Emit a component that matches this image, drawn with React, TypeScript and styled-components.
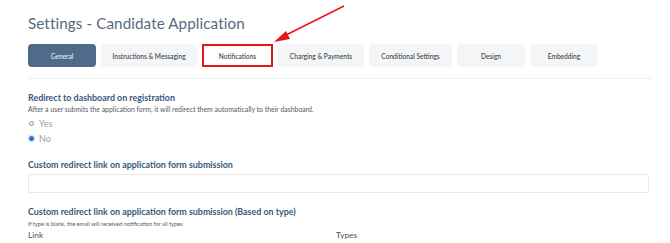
import React from 'react'
import styled, { createGlobalStyle } from 'styled-components'

// constants
const TABS = [
  { label: 'General', width: 68 },
  { label: 'Instructions & Messaging', width: 96 },
  { label: 'Notifications', width: 71, highlighted: true },
  { label: 'Charging & Payments', width: 86 },
  { label: 'Conditional Settings', width: 83 },
  { label: 'Design', width: 68 },
  { label: 'Embedding', width: 68 },
]

const GlobalStyle = createGlobalStyle`
  html, body {
    margin: 0;
    padding: 0;
    background: #ffffff;
    font-family: 'Lato', 'Noto Sans', sans-serif;
  }
`

// styled components
const Page = styled.div`
  position: relative;
  width: 670px;
  height: 243px;
  overflow: hidden;
  padding: 10px 20px 0 28px;
  box-sizing: border-box;
`

const Title = styled.h1`
  margin: 0;
  height: 26px;
  line-height: 26px;
  font-size: 15.2px;
  font-weight: 400;
  color: #566a7e;
  letter-spacing: 0.1px;
`

const TabBar = styled.div`
  display: flex;
  gap: 5px;
  margin-top: 8px;
  padding-bottom: 11px;
  border-bottom: 1px solid #eeeff1;
  width: 624px;
`

interface TabProps {
  $active?: boolean
  $highlighted?: boolean
  $w: number
}
const Tab = styled.div<TabProps>`
  width: ${({ $w }) => $w}px;
  height: 23px;
  display: flex;
  align-items: center;
  justify-content: center;
  box-sizing: border-box;
  border-radius: ${({ $highlighted }) => ($highlighted ? '0' : '4px')};
  font-size: 6.6px;
  font-weight: 500;
  color: ${({ $active }) => ($active ? '#e6ecf3' : '#3a3f45')};
  background: ${({ $active, $highlighted }) =>
    $active ? '#4e6b8c' : $highlighted ? '#ffffff' : '#f4f5f7'};
  border: ${({ $highlighted }) => ($highlighted ? '2px solid #e8141b' : 'none')};
  white-space: nowrap;
`

interface SectionProps {
  $gap?: number
}
const Section = styled.div<SectionProps>`
  margin-top: ${({ $gap }) => $gap ?? 12}px;
`

const Heading = styled.div`
  font-size: 8.9px;
  font-weight: 700;
  color: #35587c;
  line-height: 13px;
`

interface DescriptionProps {
  $size?: number
}
const Description = styled.div<DescriptionProps>`
  font-size: ${({ $size }) => $size ?? 6.9}px;
  color: #555a60;
  line-height: 9px;
  margin-top: 1px;
  white-space: nowrap;
`

const RadioRow = styled.label`
  display: flex;
  align-items: center;
  gap: 5px;
  height: 15px;
  padding-left: 1px;
  font-size: 9px;
  color: #9a9ea3;
`

interface DotProps {
  $checked?: boolean
}
const RadioDot = styled.span<DotProps>`
  width: 5px;
  height: 5px;
  border-radius: 50%;
  box-sizing: border-box;
  border: 1px solid ${({ $checked }) => ($checked ? '#2a6fd6' : '#8b8f94')};
  background: ${({ $checked }) => ($checked ? '#2a6fd6' : '#fff')};
  box-shadow: ${({ $checked }) => ($checked ? '0 0 0 1px #cfe0f7' : 'none')};
`

const RadioGroup = styled.div`
  margin-top: 2px;
`

const TextInput = styled.div`
  margin-top: 3px;
  width: 621px;
  height: 19px;
  box-sizing: border-box;
  border: 1px solid #e8e9eb;
  border-radius: 2px;
  background: #fff;
`

const Columns = styled.div`
  display: grid;
  grid-template-columns: 308px 1fr;
  margin-top: 2px;
  font-size: 8.3px;
  color: #4a4f55;
`

const Arrow = styled.svg`
  position: absolute;
  left: 268px;
  top: 0;
`

const App = () => (
  <Page>
    <GlobalStyle />
    <Title>Settings - Candidate Application</Title>
    <TabBar>
      {TABS.map((tab, i) => (
        <Tab key={tab.label} $w={tab.width} $active={i === 0} $highlighted={tab.highlighted}>
          {tab.label}
        </Tab>
      ))}
    </TabBar>

    <Section>
      <Heading>Redirect to dashboard on registration</Heading>
      <Description>
        After a user submits the application form, it will redirect them automatically to their
        dashboard.
      </Description>
      <RadioGroup>
        <RadioRow>
          <RadioDot />
          Yes
        </RadioRow>
        <RadioRow>
          <RadioDot $checked />
          No
        </RadioRow>
      </RadioGroup>
    </Section>

    <Section>
      <Heading>Custom redirect link on application form submission</Heading>
      <TextInput />
    </Section>

    <Section $gap={12}>
      <Heading>Custom redirect link on application form submission (Based on type)</Heading>
      <Description $size={5.7}>
        If type is blank, the email will received notification for all types
      </Description>
      <Columns>
        <span>Link</span>
        <span>Types</span>
      </Columns>
    </Section>

    <Arrow width="80" height="48" viewBox="0 0 80 48">
      <line x1="76" y1="6" x2="14" y2="37" stroke="#e8141b" strokeWidth="1.6" />
      <polygon points="6,42 18,31 22,39" fill="#e8141b" />
    </Arrow>
  </Page>
)

export default App
